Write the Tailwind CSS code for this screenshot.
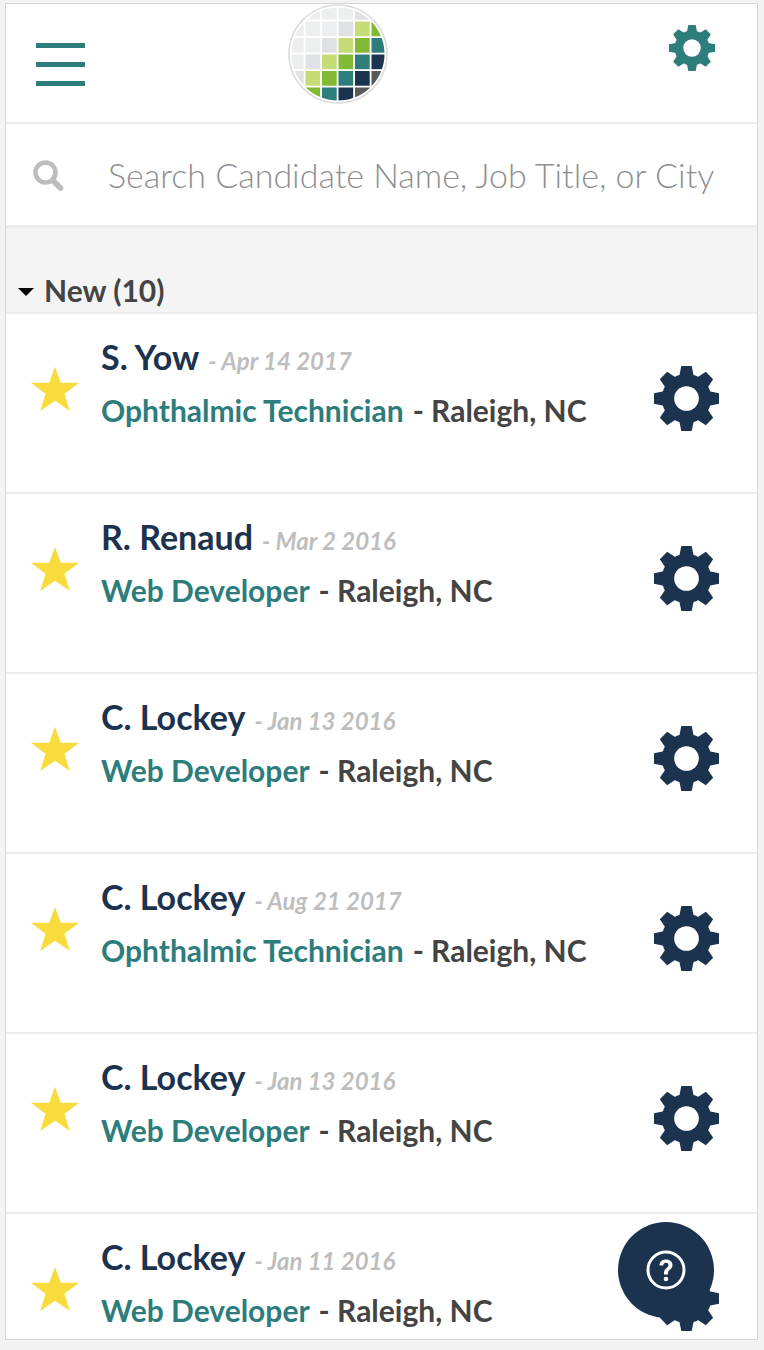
<!DOCTYPE html>
<html>
<head>
<meta charset="utf-8">
<script src="https://cdn.jsdelivr.net/npm/@tailwindcss/browser@4"></script>
</head>
<body class="m-0 bg-[#f3f3f3] font-['Lato',sans-serif]">
<svg width="0" height="0" class="absolute">
  <defs>
    <g id="gear">
      <circle cx="50" cy="50" r="38"/>
      <polygon id="t" points="39,15 42,0 58,0 61,15"/>
      <use href="#t" transform="rotate(45 50 50)"/>
      <use href="#t" transform="rotate(90 50 50)"/>
      <use href="#t" transform="rotate(135 50 50)"/>
      <use href="#t" transform="rotate(180 50 50)"/>
      <use href="#t" transform="rotate(225 50 50)"/>
      <use href="#t" transform="rotate(270 50 50)"/>
      <use href="#t" transform="rotate(315 50 50)"/>
      <circle cx="50" cy="50" r="19" fill="#fff"/>
    </g>
    <clipPath id="lc"><circle cx="50" cy="50" r="46.5"/></clipPath>
  </defs>
</svg>
<div class="h-[1350px] w-[764px] overflow-hidden pt-[3px] pl-[5px]">
  <div class="relative h-[1337px] w-[753px] overflow-hidden border border-[#d6d6d6] bg-white">
    <header class="flex h-[120px] items-start border-b-2 border-[#ececec]">
      <div class="ml-[30px] mt-[39px] flex w-[49px] flex-col gap-[14px]">
        <span class="h-[5px] bg-[#2c7d7b]"></span>
        <span class="h-[5px] bg-[#2c7d7b]"></span>
        <span class="h-[5px] bg-[#2c7d7b]"></span>
      </div>
      <svg class="ml-[203px] mt-0 shrink-0" width="100" height="100" viewBox="0 0 100 100">
        <circle cx="50" cy="50" r="49" fill="#fff" stroke="#dcdcdc" stroke-width="1.6"/>
        <g clip-path="url(#lc)">
          <g fill="#edeef0">
            <rect x="17.5" y="1" width="14.7" height="14.7"/><rect x="34" y="1" width="14.7" height="14.7"/><rect x="50.5" y="1" width="14.7" height="14.7"/>
            <rect x="1" y="17.5" width="14.7" height="14.7"/><rect x="17.5" y="17.5" width="14.7" height="14.7"/><rect x="34" y="17.5" width="14.7" height="14.7"/>
            <rect x="1" y="34" width="14.7" height="14.7"/><rect x="17.5" y="34" width="14.7" height="14.7"/>
            <rect x="1" y="50.5" width="14.7" height="14.7"/>
          </g>
          <g fill="#e0e1e2">
            <rect x="67" y="1" width="14.7" height="14.7"/><rect x="50.5" y="17.5" width="14.7" height="14.7"/><rect x="34" y="34" width="14.7" height="14.7"/><rect x="17.5" y="50.5" width="14.7" height="14.7"/><rect x="1" y="67" width="14.7" height="14.7"/>
          </g>
          <g fill="#c6dc76">
            <rect x="67" y="17.5" width="14.7" height="14.7"/><rect x="50.5" y="34" width="14.7" height="14.7"/><rect x="34" y="50.5" width="14.7" height="14.7"/><rect x="17.5" y="67" width="14.7" height="14.7"/><rect x="1" y="83.5" width="14.7" height="14.7"/>
          </g>
          <g fill="#82ba35">
            <rect x="83.5" y="17.5" width="14.7" height="14.7"/><rect x="67" y="34" width="14.7" height="14.7"/><rect x="50.5" y="50.5" width="14.7" height="14.7"/><rect x="34" y="67" width="14.7" height="14.7"/><rect x="17.5" y="83.5" width="14.7" height="14.7"/>
          </g>
          <g fill="#2c7d7b">
            <rect x="83.5" y="34" width="14.7" height="14.7"/><rect x="67" y="50.5" width="14.7" height="14.7"/><rect x="50.5" y="67" width="14.7" height="14.7"/><rect x="34" y="83.5" width="14.7" height="14.7"/>
          </g>
          <g fill="#1c334f">
            <rect x="83.5" y="50.5" width="14.7" height="14.7"/><rect x="67" y="67" width="14.7" height="14.7"/><rect x="50.5" y="83.5" width="14.7" height="14.7"/>
          </g>
          <g fill="#58595b">
            <rect x="83.5" y="67" width="14.7" height="14.7"/><rect x="67" y="83.5" width="14.7" height="14.7"/>
          </g>
        </g>
      </svg>
      <svg class="ml-[281px] mt-[21px] shrink-0 fill-[#2c7d7b]" width="46" height="46" viewBox="0 0 100 100"><use href="#gear"/></svg>
    </header>
    <div class="flex h-[104px] items-center border-b-[3px] border-[#ececec]">
      <svg class="ml-[26px] shrink-0" width="32" height="32" viewBox="0 0 32 32" fill="none" stroke="#bdbdbd">
        <circle cx="13.5" cy="13.5" r="10" stroke-width="4.5"/>
        <path d="M20.5 21 L28.5 29" stroke-width="5.5" stroke-linecap="round"/>
      </svg>
      <span class="ml-[44px] whitespace-nowrap text-[34px] font-light leading-none text-[#8f8f8f]">Search Candidate Name, Job Title, or City</span>
    </div>
    <div class="flex h-[84px] items-end bg-[#f4f4f4] pb-[4px]">
      <span class="ml-[12px] mb-[12px] h-0 w-0 border-x-[8px] border-t-[8px] border-x-transparent border-t-black"></span>
      <span class="ml-[10px] text-[30px] font-bold leading-[36px] text-[#444444]">New (10)</span>
    </div>
    <div class="h-[180px] border-t-2 border-[#ececec] flex items-start">
      <svg class="ml-[25px] mt-[53px] shrink-0 fill-[#f8dc3d]" width="48" height="44" viewBox="0 0 48 44"><polygon points="24,0 29.8,15.8 48,15.8 33.5,26.7 38.8,44 24,33.7 9.2,44 14.500,26.7 0,15.800 18.200,15.800"/></svg>
      <div class="ml-[22px] mt-[22px] flex-1">
        <div class="flex h-[42px] items-baseline whitespace-nowrap"><span class="text-[34px] font-bold leading-[42px] text-[#1c334f]">S. Yow</span><span class="ml-[9px] text-[24px] font-bold italic text-[#bebebe]">- Apr 14 2017</span></div>
        <div class="mt-[14px] flex items-baseline whitespace-nowrap text-[30px] font-bold leading-[36px]"><span class="text-[#2c7d7b]">Ophthalmic Technician</span><span class="ml-[9px] text-[#444444]">- Raleigh, NC</span></div>
      </div>
      <svg class="mr-[38px] mt-[52px] shrink-0 fill-[#1c334f]" width="65" height="65" viewBox="0 0 100 100"><use href="#gear"/></svg>
    </div>
    <div class="h-[180px] border-t-2 border-[#ececec] flex items-start">
      <svg class="ml-[25px] mt-[53px] shrink-0 fill-[#f8dc3d]" width="48" height="44" viewBox="0 0 48 44"><polygon points="24,0 29.8,15.8 48,15.8 33.5,26.7 38.8,44 24,33.7 9.2,44 14.500,26.7 0,15.800 18.200,15.800"/></svg>
      <div class="ml-[22px] mt-[22px] flex-1">
        <div class="flex h-[42px] items-baseline whitespace-nowrap"><span class="text-[34px] font-bold leading-[42px] text-[#1c334f]">R. Renaud</span><span class="ml-[9px] text-[24px] font-bold italic text-[#bebebe]">- Mar 2 2016</span></div>
        <div class="mt-[14px] flex items-baseline whitespace-nowrap text-[30px] font-bold leading-[36px]"><span class="text-[#2c7d7b]">Web Developer</span><span class="ml-[9px] text-[#444444]">- Raleigh, NC</span></div>
      </div>
      <svg class="mr-[38px] mt-[52px] shrink-0 fill-[#1c334f]" width="65" height="65" viewBox="0 0 100 100"><use href="#gear"/></svg>
    </div>
    <div class="h-[180px] border-t-2 border-[#ececec] flex items-start">
      <svg class="ml-[25px] mt-[53px] shrink-0 fill-[#f8dc3d]" width="48" height="44" viewBox="0 0 48 44"><polygon points="24,0 29.8,15.8 48,15.8 33.5,26.7 38.8,44 24,33.7 9.2,44 14.500,26.7 0,15.800 18.200,15.800"/></svg>
      <div class="ml-[22px] mt-[22px] flex-1">
        <div class="flex h-[42px] items-baseline whitespace-nowrap"><span class="text-[34px] font-bold leading-[42px] text-[#1c334f]">C. Lockey</span><span class="ml-[9px] text-[24px] font-bold italic text-[#bebebe]">- Jan 13 2016</span></div>
        <div class="mt-[14px] flex items-baseline whitespace-nowrap text-[30px] font-bold leading-[36px]"><span class="text-[#2c7d7b]">Web Developer</span><span class="ml-[9px] text-[#444444]">- Raleigh, NC</span></div>
      </div>
      <svg class="mr-[38px] mt-[52px] shrink-0 fill-[#1c334f]" width="65" height="65" viewBox="0 0 100 100"><use href="#gear"/></svg>
    </div>
    <div class="h-[180px] border-t-2 border-[#ececec] flex items-start">
      <svg class="ml-[25px] mt-[53px] shrink-0 fill-[#f8dc3d]" width="48" height="44" viewBox="0 0 48 44"><polygon points="24,0 29.8,15.8 48,15.8 33.5,26.7 38.8,44 24,33.7 9.2,44 14.500,26.7 0,15.800 18.200,15.800"/></svg>
      <div class="ml-[22px] mt-[22px] flex-1">
        <div class="flex h-[42px] items-baseline whitespace-nowrap"><span class="text-[34px] font-bold leading-[42px] text-[#1c334f]">C. Lockey</span><span class="ml-[9px] text-[24px] font-bold italic text-[#bebebe]">- Aug 21 2017</span></div>
        <div class="mt-[14px] flex items-baseline whitespace-nowrap text-[30px] font-bold leading-[36px]"><span class="text-[#2c7d7b]">Ophthalmic Technician</span><span class="ml-[9px] text-[#444444]">- Raleigh, NC</span></div>
      </div>
      <svg class="mr-[38px] mt-[52px] shrink-0 fill-[#1c334f]" width="65" height="65" viewBox="0 0 100 100"><use href="#gear"/></svg>
    </div>
    <div class="h-[180px] border-t-2 border-[#ececec] flex items-start">
      <svg class="ml-[25px] mt-[53px] shrink-0 fill-[#f8dc3d]" width="48" height="44" viewBox="0 0 48 44"><polygon points="24,0 29.8,15.8 48,15.8 33.5,26.7 38.8,44 24,33.7 9.2,44 14.500,26.7 0,15.800 18.200,15.800"/></svg>
      <div class="ml-[22px] mt-[22px] flex-1">
        <div class="flex h-[42px] items-baseline whitespace-nowrap"><span class="text-[34px] font-bold leading-[42px] text-[#1c334f]">C. Lockey</span><span class="ml-[9px] text-[24px] font-bold italic text-[#bebebe]">- Jan 13 2016</span></div>
        <div class="mt-[14px] flex items-baseline whitespace-nowrap text-[30px] font-bold leading-[36px]"><span class="text-[#2c7d7b]">Web Developer</span><span class="ml-[9px] text-[#444444]">- Raleigh, NC</span></div>
      </div>
      <svg class="mr-[38px] mt-[52px] shrink-0 fill-[#1c334f]" width="65" height="65" viewBox="0 0 100 100"><use href="#gear"/></svg>
    </div>
    <div class="h-[180px] border-t-2 border-[#ececec] flex items-start">
      <svg class="ml-[25px] mt-[53px] shrink-0 fill-[#f8dc3d]" width="48" height="44" viewBox="0 0 48 44"><polygon points="24,0 29.8,15.8 48,15.8 33.5,26.7 38.8,44 24,33.7 9.2,44 14.500,26.7 0,15.800 18.200,15.800"/></svg>
      <div class="ml-[22px] mt-[22px] flex-1">
        <div class="flex h-[42px] items-baseline whitespace-nowrap"><span class="text-[34px] font-bold leading-[42px] text-[#1c334f]">C. Lockey</span><span class="ml-[9px] text-[24px] font-bold italic text-[#bebebe]">- Jan 11 2016</span></div>
        <div class="mt-[14px] flex items-baseline whitespace-nowrap text-[30px] font-bold leading-[36px]"><span class="text-[#2c7d7b]">Web Developer</span><span class="ml-[9px] text-[#444444]">- Raleigh, NC</span></div>
      </div>
      <svg class="mr-[38px] mt-[52px] shrink-0 fill-[#1c334f]" width="65" height="65" viewBox="0 0 100 100"><use href="#gear"/></svg>
    </div>
    <button class="absolute left-[612px] top-[1218px] flex h-[96px] w-[96px] items-center justify-center rounded-full bg-[#1c334f]">
      <svg width="40" height="40" viewBox="0 0 40 40" fill="none">
        <circle cx="20" cy="20" r="18" stroke="#fff" stroke-width="3"/>
        <path d="M13.500 15.500 C13.500 11.500 16.300 9.500 20 9.500 C23.700 9.500 26.500 11.700 26.500 15 C26.500 18 24.500 19.200 23 20.500 C22 21.400 22 22.500 22 24.500 H18 C18 22 18 20.500 19.500 19 C21 17.500 22.500 16.800 22.500 15 C22.500 13.500 21.500 12.800 20 12.800 C18.300 12.800 17.300 13.800 17.200 15.500 Z" fill="#fff"/>
        <circle cx="20" cy="29" r="2.300" fill="#fff"/>
      </svg>
    </button>
  </div>
</div>
</body>
</html>
